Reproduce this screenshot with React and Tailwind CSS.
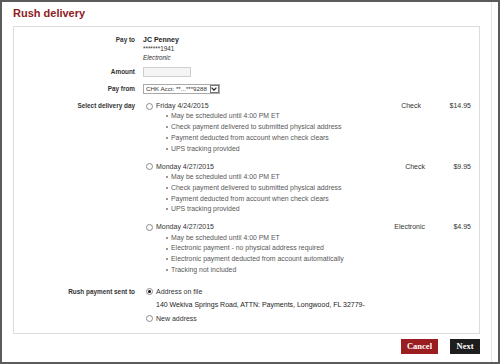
const OPTIONS = [
  {
    day: 'Friday 4/24/2015',
    method: 'Check',
    price: '$14.95',
    shift: 'pr-[4px]',
    notes: [
      'May be scheduled until 4:00 PM ET',
      'Check payment delivered to submitted physical address',
      'Payment deducted from account when check clears',
      'UPS tracking provided',
    ],
  },
  {
    day: 'Monday 4/27/2015',
    method: 'Check',
    price: '$9.95',
    shift: '',
    notes: [
      'May be scheduled until 4:00 PM ET',
      'Check payment delivered to submitted physical address',
      'Payment deducted from account when check clears',
      'UPS tracking provided',
    ],
  },
  {
    day: 'Monday 4/27/2015',
    method: 'Electronic',
    price: '$4.95',
    shift: '',
    notes: [
      'May be scheduled until 4:00 PM ET',
      'Electronic payment - no physical address required',
      'Electronic payment deducted from account automatically',
      'Tracking not included',
    ],
  },
];

function Radio({ checked }) {
  return (
    <span className="ml-[3px] mr-[3px] w-[7px] h-[7px] rounded-full border border-[#8a8a8a] bg-white flex items-center justify-center shrink-0">
      {checked && <span className="w-[3px] h-[3px] rounded-full bg-[#111]" />}
    </span>
  );
}

function Label({ children }) {
  return (
    <div className="w-[121px] shrink-0 text-right font-bold text-[6.4px] leading-[10px] text-[#333]">
      {children}
    </div>
  );
}

export default function App() {
  return (
    <div className="w-[500px] h-[364px] border-2 border-[#5b5b5b] bg-white flex font-['Liberation_Sans',Arial,sans-serif] text-[#333]">
      <div className="w-[490px] border-r border-[#e3e3e3] px-[11px]">
        <h1 className="h-[24px] pt-[3px] text-[11px] leading-[16px] font-bold text-[#8e1b1e]">Rush delivery</h1>

        <div className="border border-[#dcdcdc] pt-[8px] pb-[9px] pr-[8px]">
          <div className="flex">
            <Label>Pay to</Label>
            <div className="ml-[8px]">
              <div className="text-[7px] leading-[10px] font-bold text-[#222]">JC Penney</div>
              <div className="text-[6.3px] leading-[8.5px]">*******1941</div>
              <div className="text-[6.3px] leading-[8.5px] italic">Electronic</div>
            </div>
          </div>

          <div className="flex mt-[5px]">
            <Label>Amount</Label>
            <div className="ml-[8px] w-[48px] h-[10px] border border-[#cfcfcf] bg-[#f4f4f4]" />
          </div>

          <div className="flex mt-[7px]">
            <Label>Pay from</Label>
            <div className="ml-[8px] w-[77px] h-[10px] border border-[#a9a9a9] bg-white flex items-center">
              <span className="flex-1 pl-[2px] text-[6.2px] leading-[8px] whitespace-nowrap overflow-hidden">CHK Acct: **...***9288</span>
              <span className="w-[9px] h-[8px] mr-[0.5px] border border-[#777] flex items-center justify-center">
                <svg width="6" height="4" viewBox="0 0 6 4">
                  <path d="M0.6 0.6 L3 3.2 L5.4 0.6" fill="none" stroke="#222" strokeWidth="1.2" />
                </svg>
              </span>
            </div>
          </div>

          <div className="flex mt-[7px]">
            <Label>Select delivery day</Label>
            <div className="ml-[8px] flex-1">
              {OPTIONS.map((o, i) => (
                <div key={i} className={i > 0 ? 'mt-[7.5px]' : ''}>
                  <div className="flex items-center h-[10px]">
                    <Radio />
                    <span className="flex-1 text-[7px] leading-[10px] text-[#333]">{o.day}</span>
                    <span className={`w-[50px] text-right text-[7px] leading-[10px] ${o.shift}`}>{o.method}</span>
                    <span className="w-[46px] text-right text-[7px] leading-[10px]">{o.price}</span>
                  </div>
                  <ul className="pl-[23px]">
                    {o.notes.map((n) => (
                      <li key={n} className="flex items-center h-[10.8px] text-[6.9px] text-[#585858]">
                        <span className="w-[2px] h-[2px] rounded-full bg-[#777] mr-[3px] shrink-0" />
                        {n}
                      </li>
                    ))}
                  </ul>
                </div>
              ))}
            </div>
          </div>

          <div className="flex mt-[11px]">
            <Label>Rush payment sent to</Label>
            <div className="ml-[8px]">
              <div className="flex items-center h-[10px]">
                <Radio checked />
                <span className="text-[7px] leading-[10px]">Address on file</span>
              </div>
              <div className="mt-[3px] pl-[13px] text-[7px] leading-[10px] text-[#222]">
                140 Wekiva Springs Road, ATTN: Payments, Longwood, FL 32779-
              </div>
              <div className="flex items-center h-[10px] mt-[4px]">
                <Radio />
                <span className="text-[7px] leading-[10px]">New address</span>
              </div>
            </div>
          </div>
        </div>

        <div className="mt-[5px] flex justify-end gap-[12px]">
          <button className="w-[37px] h-[15px] bg-[#9a1d20] text-white font-bold font-['Liberation_Serif',serif] text-[8.5px] leading-[15px]">Cancel</button>
          <button className="w-[30px] h-[15px] bg-[#1e1e1e] text-white font-bold font-['Liberation_Serif',serif] text-[8.5px] leading-[15px]">Next</button>
        </div>
      </div>
    </div>
  );
}
